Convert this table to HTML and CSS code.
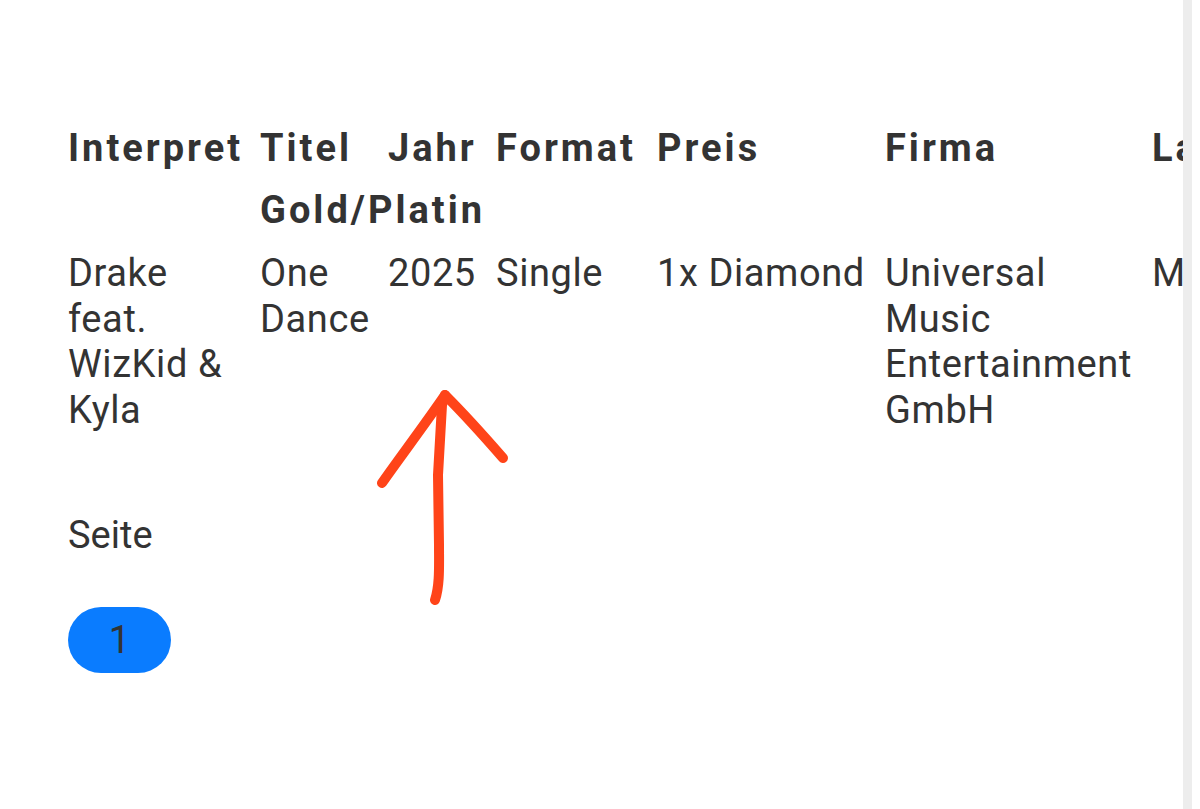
FILE: index.html
```html
<!DOCTYPE html>
<html lang="de">
<head>
<meta charset="utf-8">
<title>Verleihungen</title>
<link rel="stylesheet" href="styles.css">
</head>
<body>
<div class="page">
  <main class="content">
    <table class="awards">
      <thead>
        <tr class="head-row">
          <th class="c-interpret">Interpret</th>
          <th class="c-titel">Titel</th>
          <th class="c-jahr">Jahr</th>
          <th class="c-format">Format</th>
          <th class="c-preis">Preis</th>
          <th class="c-firma">Firma</th>
          <th class="c-land">Land</th>
        </tr>
        <tr class="head-row2">
          <th></th>
          <th colspan="3" class="sub">Gold/Platin</th>
          <th></th><th></th><th></th><th></th>
        </tr>
      </thead>
      <tbody>
        <tr>
          <td>Drake feat. WizKid &amp; Kyla</td>
          <td>One Dance</td>
          <td>2025</td>
          <td>Single</td>
          <td class="nowrap">1x Diamond</td>
          <td>Universal Music Entertainment GmbH</td>
          <td>Monat</td>
        </tr>
      </tbody>
    </table>
    <p class="seite">Seite</p>
    <div class="pager"><span class="page-btn">1</span></div>
    <svg class="arrow" width="160" height="240" viewBox="0 0 160 240">
      <path d="M67 235 C 72 220, 71 200, 71 180 L 70 110 L 74 40 L 77 30" />
      <path d="M14 118 C 30 95, 55 62, 77 30 C 95 48, 115 70, 135 93" />
    </svg>
  </main>
  <div class="scrollbar"></div>
</div>
</body>
</html>
```

FILE: styles.css
```css
html, body {
  margin: 0;
  padding: 0;
  background: #ffffff;
}

body {
  font-family: Roboto, "Noto Sans", "Liberation Sans", sans-serif;
  color: #333333;
}

.page {
  display: flex;
  width: 1200px;
  height: 809px;
  overflow: hidden;
}

.content {
  position: relative;
  width: 1183px;
  flex: none;
  overflow: hidden;
  padding: 118px 0 0 60px;
  box-sizing: border-box;
}

.scrollbar {
  width: 9px;
  flex: none;
  background: #ededed;
}

.awards {
  border-collapse: collapse;
  table-layout: fixed;
  width: 1200px;
  font-size: 38px;
  line-height: 45.5px;
  letter-spacing: 0.6px;
}

.awards th, .awards td {
  padding: 0 8px;
  text-align: left;
  vertical-align: top;
}

.awards th {
  font-weight: 700;
  letter-spacing: 3px;
  padding-top: 8px;
  padding-bottom: 8px;
}

.head-row2 th {
  padding-top: 8px;
  padding-bottom: 18px;
}

.c-interpret { width: 176px; }
.c-titel { width: 112px; }
.c-jahr { width: 92px; }
.c-format { width: 145px; }
.c-preis { width: 212px; }
.c-firma { width: 251px; }
.c-land { width: 150px; }

.sub { white-space: nowrap; }
.nowrap { white-space: nowrap; }

.seite {
  margin: 80px 0 0 8px;
  font-size: 38px;
  line-height: 45.5px;
}

.pager {
  margin: 48px 0 0 8px;
  display: flex;
}

.page-btn {
  display: flex;
  align-items: center;
  justify-content: center;
  width: 103px;
  height: 66px;
  border-radius: 33px;
  background: #0a7cff;
  color: #333333;
  font-size: 38px;
}

.arrow {
  position: absolute;
  left: 368px;
  top: 365px;
  fill: none;
  stroke: #ff4419;
  stroke-width: 10;
  stroke-linecap: round;
  stroke-linejoin: round;
}
```
